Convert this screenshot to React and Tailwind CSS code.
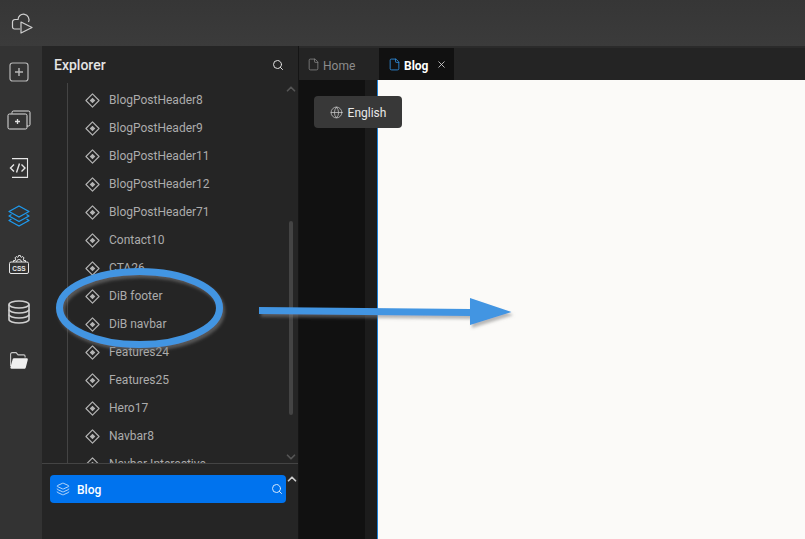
import { ChevronDown, ChevronUp, File, Globe, Layers, Search, X } from 'lucide-react';

const items = [
  'BlogPostHeader8',
  'BlogPostHeader9',
  'BlogPostHeader11',
  'BlogPostHeader12',
  'BlogPostHeader71',
  'Contact10',
  'CTA26',
  'DiB footer',
  'DiB navbar',
  'Features24',
  'Features25',
  'Hero17',
  'Navbar8',
  'Navbar Interactive',
];

function ComponentIcon() {
  return (
    <svg width="15" height="15" viewBox="0 0 16 16" fill="none" className="shrink-0 text-[#b4b4b4]" aria-hidden="true">
      <path d="M8 1 15 8 8 15 1 8Z" stroke="currentColor" strokeWidth="1.2" strokeLinejoin="round" />
      <path d="M8 5 11 8 8 11 5 8Z" fill="currentColor" />
    </svg>
  );
}

function RailButton({ children }) {
  return <div className="flex h-[48px] w-full items-center justify-center">{children}</div>;
}

function Rail() {
  return (
    <div className="flex w-[42px] shrink-0 flex-col items-center bg-[#333333] pr-[4px] pt-[2px]">
      <RailButton>
        <svg width="20" height="20" viewBox="0 0 20 20" fill="none" stroke="#b8b8b8" strokeWidth="1.2">
          <rect x="1" y="1" width="18" height="18" rx="2.5" />
          <path d="M10 6v8M6 10h8" strokeWidth="1.4" />
        </svg>
      </RailButton>
      <RailButton>
        <svg width="24" height="20" viewBox="0 0 24 20" fill="none" stroke="#e0e0e0" strokeWidth="1">
          <path d="M5 3.500V2.500a1.500 1.500 0 0 1 1.500-1.500h15A1.500 1.500 0 0 1 23 2.500v12a1.500 1.500 0 0 1-1.500 1.500H20" />
          <rect x="1" y="4" width="19" height="15" rx="1.500" />
          <path d="M10.500 9v5M8 11.500h5" strokeWidth="1.300" />
        </svg>
      </RailButton>
      <RailButton>
        <svg width="20" height="20" viewBox="0 0 20 20" fill="none" stroke="#e6e6e6" strokeWidth="1.100">
          <path d="M3 .600h15.500v18.800H3" />
          <path d="M5 6.500 1.500 10 5 13.500M12.500 6.500 16 10l-3.500 3.500" strokeWidth="1.400" />
          <path d="M10.500 5.500 7.500 14.500" strokeWidth="1.400" />
        </svg>
      </RailButton>
      <RailButton>
        <svg width="22" height="22" viewBox="0 0 22 22" fill="none" stroke="#1e9bf0" strokeWidth="1.300" strokeLinejoin="round">
          <path d="M11 1 21 6.500 11 12 1 6.500Z" />
          <path d="M3.500 9.500 1 11 11 16.500 21 11l-2.500-1.500" />
          <path d="M3.500 14 1 15.500 11 21 21 15.500 18.500 14" />
        </svg>
      </RailButton>
      <RailButton>
        <svg width="20" height="20" viewBox="0 0 20 20" fill="none" stroke="#e6e6e6" strokeWidth="1">
          <rect x=".500" y="8" width="19" height="11.500" rx="1.500" />
          <path d="M4.500 8V6.500h1.700l.6-1.500-1-1L7.300 2.500l1 .8 1-.4.300-1.400h1.800l.3 1.400 1 .4 1-.8L15.200 4l-1 1 .6 1.500h1.700V8" />
          <path d="M7.500 8a2.500 2.500 0 0 1 5 0" />
          <text x="10" y="16.500" textAnchor="middle" fontSize="6.500" fontWeight="700" fill="#e6e6e6" stroke="none" fontFamily="Liberation Sans, sans-serif">CSS</text>
        </svg>
      </RailButton>
      <RailButton>
        <svg width="22" height="24" viewBox="0 0 22 24" fill="none" stroke="#d0d0d0" strokeWidth="1.600">
          <ellipse cx="11" cy="4.500" rx="10" ry="3.500" />
          <path d="M1 4.500v15c0 1.900 4.500 3.500 10 3.500s10-1.600 10-3.500v-15" />
          <path d="M1 9.500c0 1.900 4.500 3.500 10 3.500s10-1.600 10-3.500" />
          <path d="M1 14.500c0 1.900 4.500 3.500 10 3.500s10-1.600 10-3.500" />
        </svg>
      </RailButton>
      <RailButton>
        <svg width="18" height="17" viewBox="0 0 18 17" aria-hidden="true">
          <path d="M.600 14V2.200c0-.9.600-1.600 1.500-1.600h4l2 2.300h5.700c.8 0 1.300.6 1.300 1.300v1.300" fill="none" stroke="#c8c8c8" strokeWidth="1.100" />
          <path d="M3.800 6.300h12.900c.8 0 1.300.7 1.100 1.500l-2 7.600c-.2.800-.8 1.300-1.600 1.300H1.500c-.8 0-1.300-.7-1.100-1.400l2-7c.2-1.100.6-2 1.400-2Z" fill="#f0f0f0" />
        </svg>
      </RailButton>
    </div>
  );
}

function Explorer() {
  return (
    <div className="flex w-[256px] shrink-0 flex-col bg-[#252525]">
      <div className="flex h-[37px] shrink-0 items-center justify-between pl-[12px] pr-[14px]">
        <span className="pt-[2px] text-[14px] font-medium text-[#e4e4e4]">Explorer</span>
        <Search className="h-[12px] w-[12px] text-[#e0e0e0]" strokeWidth={2} aria-hidden="true" />
      </div>
      <div className="relative h-[381px] shrink-0 overflow-hidden border-b border-[#444444]">
        <div className="ml-[25px] flex flex-col border-l border-[#444444] pl-[17px] pt-[3px]">
          {items.map((name) => (
            <div key={name} className="flex h-[28px] shrink-0 items-center gap-[9px] text-[12px] text-[#acacac]">
              <ComponentIcon />
              <span>{name}</span>
            </div>
          ))}
        </div>
        <div className="absolute inset-y-0 right-0 w-[12px]">
          <ChevronUp className="absolute left-[-2px] top-[-1px] h-[14px] w-[14px] text-[#555555]" strokeWidth={3} aria-hidden="true" />
          <div className="absolute left-[3px] top-[138px] h-[194px] w-[4px] rounded-full bg-[#444444]" />
          <ChevronDown className="absolute bottom-[-1px] left-[-2px] h-[14px] w-[14px] text-[#555555]" strokeWidth={3} aria-hidden="true" />
        </div>
      </div>
      <div className="relative flex-1 pl-[8px] pr-[12px] pt-[11px]">
        <div className="flex h-[28px] items-center rounded-[4px] bg-[#0073ee] pl-[6px] pr-[3px] text-[12px] font-medium text-white">
          <Layers className="mr-[7px] h-[14px] w-[14px] text-[#cfe4fb]" strokeWidth={1.5} aria-hidden="true" />
          <span className="pt-[2px]">Blog</span>
          <Search className="ml-auto h-[12px] w-[12px] text-[#d5e8fc]" aria-hidden="true" />
        </div>
        <ChevronUp className="absolute right-[-1px] top-[8px] h-[14px] w-[14px] text-[#cccccc]" strokeWidth={3} aria-hidden="true" />
      </div>
    </div>
  );
}

function Tabs() {
  return (
    <div className="flex h-[32px] shrink-0 bg-[#242424] text-[12px]">
      <div className="flex w-[80px] items-center gap-[3px] pl-[8px] text-[#8c8c8c]">
        <File className="h-[13px] w-[13px] text-[#8c8c8c]" strokeWidth={1.4} aria-hidden="true" />
        <span className="pt-[3px]">Home</span>
      </div>
      <div className="flex w-[75px] items-center bg-[#111111] pl-[9px] text-white">
        <File className="mr-[3px] h-[13px] w-[13px] text-[#2f8fe0]" strokeWidth={1.6} aria-hidden="true" />
        <span className="pt-[3px] font-bold">Blog</span>
        <X className="ml-[8px] h-[11px] w-[11px] text-[#d8d8d8]" strokeWidth={1.8} aria-hidden="true" />
      </div>
    </div>
  );
}

function Annotation() {
  return (
    <svg width="805" height="539" viewBox="0 0 805 539" className="pointer-events-none absolute left-0 top-0" fill="none" aria-hidden="true">
      <defs>
        <filter id="shade" x="-20%" y="-40%" width="140%" height="200%">
          <feDropShadow dx="2" dy="3" stdDeviation="1.800" floodColor="#808080" floodOpacity="0.55" />
        </filter>
      </defs>
      <g filter="url(#shade)">
        <ellipse cx="139.500" cy="308" rx="80" ry="36.500" stroke="#4295e2" strokeWidth="7" />
      </g>
      <g filter="url(#shade)">
        <path d="M259 307 470 309V298L511.500 312 470 325V316L259 314Z" fill="#4295e2" />
      </g>
    </svg>
  );
}

export default function App() {
  return (
    <div className="relative h-[539px] w-[805px] overflow-hidden bg-[#333333] font-['Roboto','Noto_Sans',sans-serif]">
      <div className="flex h-[46px] items-center bg-gradient-to-b from-[#363636] to-[#3b3b3b] pl-[11px]">
        <svg width="22" height="22" viewBox="0 0 22 22" fill="none" stroke="#cfcfcf" strokeWidth="1.200" strokeLinejoin="round" aria-hidden="true">
          <path d="M9 17H3.500A2 2 0 0 1 1.500 15V10A2.500 2.500 0 0 1 4 7.500H7" />
          <path d="M7 8A5.500 5.500 0 1 1 17.500 10" />
          <path d="M10 10 21 15.500 10 21Z" />
        </svg>
      </div>
      <div className="flex h-[493px]">
        <Rail />
        <Explorer />
        <div className="w-px shrink-0 bg-[#151515]" />
        <div className="flex min-w-0 flex-1 flex-col">
          <div className="h-[2px] shrink-0 bg-[#2b2b2b]" />
          <Tabs />
          <div className="flex min-h-0 flex-1">
            <div className="relative w-[78px] shrink-0 bg-[#111111]">
              <div className="absolute inset-y-0 right-0 w-[12px] bg-[#1c1c1c]" />
              <div className="absolute left-[15px] top-[16px] flex h-[32px] w-[88px] items-center justify-center gap-[5px] rounded-[4px] bg-[#383838] text-[12px] text-[#e8e8e8]">
                <Globe className="h-[13px] w-[13px] text-[#d0d0d0]" strokeWidth={1.3} aria-hidden="true" />
                <span className="pt-[2px]">English</span>
              </div>
            </div>
            <div className="flex-1 border-l border-[#1b7fd6] bg-[#fbfaf8]" />
          </div>
        </div>
      </div>
      <Annotation />
    </div>
  );
}
